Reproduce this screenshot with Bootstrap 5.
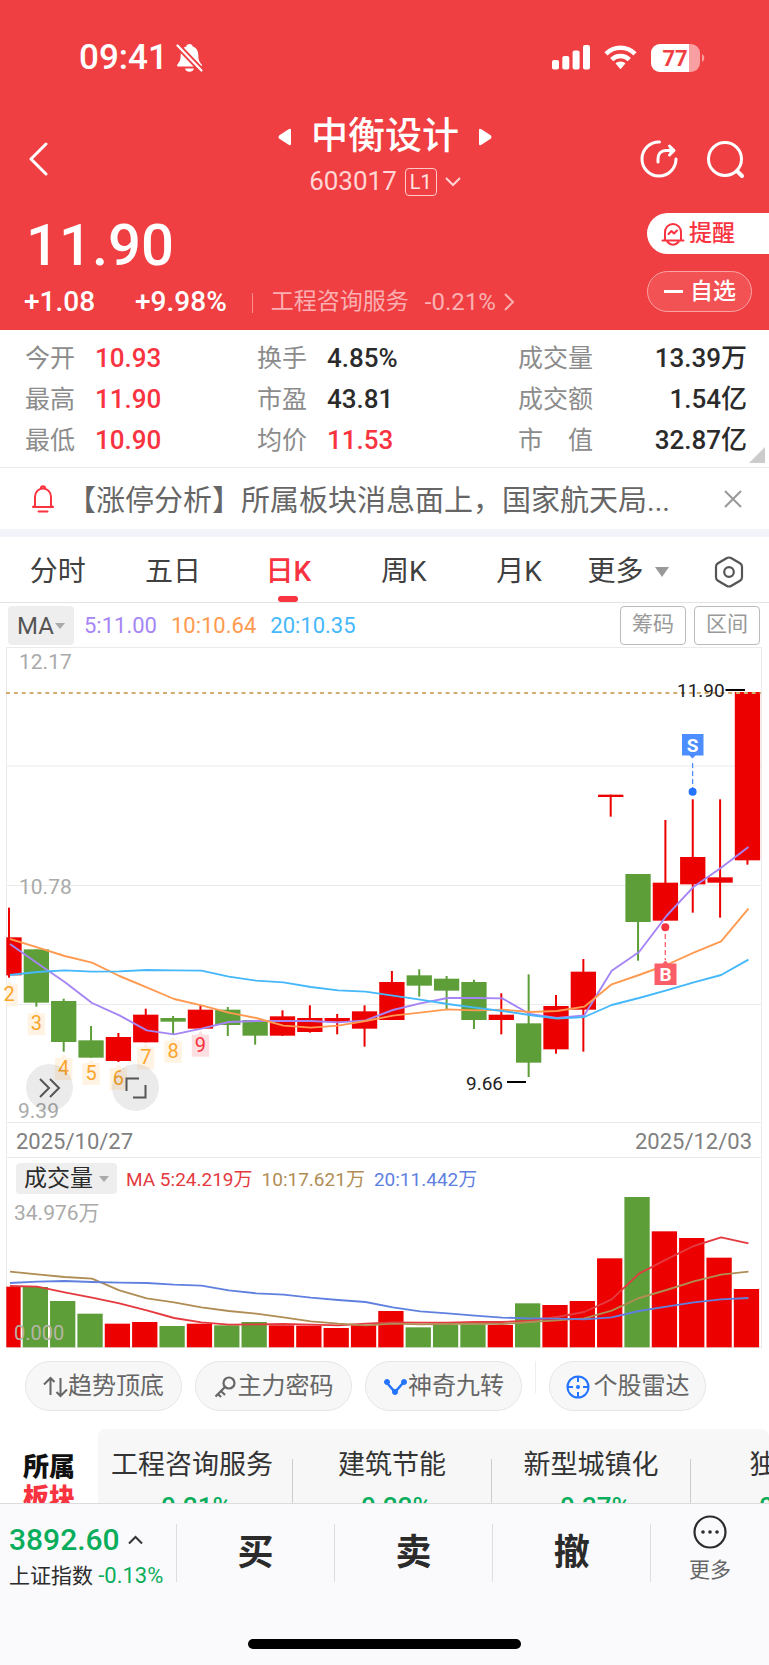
<!DOCTYPE html>
<html lang="zh-CN">
<head>
<meta charset="utf-8">
<meta name="viewport" content="width=device-width, initial-scale=1">
<title>中衡设计 603017</title>
<link href="https://cdn.jsdelivr.net/npm/bootstrap@5.3.0/dist/css/bootstrap.min.css" rel="stylesheet">
<style>
:root{--up:#f9333f;--brand:#f03f42;--down:#0aad5c;--ink:#2b2b2b;--muted:#8c8c8c;--line:#ebebeb}
body{font-family:Roboto,"Noto Sans CJK SC",sans-serif;color:var(--ink);background:#fff;line-height:1.2}
a{color:inherit;text-decoration:none}
button{border:0;background:none;padding:0;color:inherit;white-space:nowrap}
svg{display:block;flex-shrink:0}
.nowrap{white-space:nowrap}
.up{color:var(--up)}
.down{color:var(--down)}
.scroller{overflow:hidden;min-height:0}
/* header */
.hero{background:var(--brand);color:#fff}
.status{height:112px;padding:3px 64px 0 79px}
.clock{font-size:35px;font-weight:500}
.navrow{height:94px;display:grid;grid-template-columns:1fr auto 1fr;align-items:center;padding:0 23px 0 24px}
.title{font-size:37px;line-height:50px;font-weight:500;margin:0}
.codeline{height:40px;font-size:26px;color:#ffd5d6;margin-bottom:4px}
.lvl{border:1px solid #ffc9ca;border-radius:4px;font-size:20px;line-height:26px;padding:0 4px;color:#ffe4e4}
.price{font-size:58px;line-height:78px;font-weight:500;padding-left:26px}
.change{height:36px;font-size:28px;font-weight:500;padding-left:24px}
.sector{font-size:23px;font-weight:400;color:#fab0b2;position:relative;line-height:28px;padding-left:19px;margin-left:25px}
.sector::before{content:"";position:absolute;left:0;top:5px;bottom:3px;width:1px;background:#f78f91}
.quote{height:124px}
.acts{width:122px;padding-top:7px;gap:17px}
.act{height:41px;font-size:23px;font-weight:500;border-radius:21px;width:105px;gap:4px}
.act.alarm{background:#fff;color:var(--up);border-radius:21px 0 0 21px;width:100%;padding-left:14px}
.act.pick{background:#f25254;border:1px solid #f9a3a5;padding-left:16px;gap:7px}
/* stats */
.stats{padding:8px 22px 6px 25px;border-bottom:1px solid var(--line);display:grid;grid-template-columns:232px 261px 1fr;line-height:41px;font-size:25px;position:relative}
.stats dt{font-weight:400;color:var(--muted);font-size:25px;width:50px;white-space:nowrap}
.stats dd{margin:0 0 0 20px;font-size:26px;font-weight:500}
.stats .g3 dt{width:75px}
.fold{position:absolute;right:4px;bottom:4px;width:0;height:0;border-left:16px solid transparent;border-bottom:16px solid #ccc}
.news{height:61px;padding:0 27px 0 31px;color:#666;font-size:29px}
.news a{margin-left:12px;padding-top:5px}
.band{height:8px;background:#f3f4f9}
.tabs{height:66px;border-bottom:1px solid #e3e3e3;font-size:28px;color:#404040}
.tabs button{flex:3 1 0;position:relative;height:65px;padding-top:4px}
.tabs .extra{gap:12px}
.tabs .extra .tri{margin-right:12px}
.tabs .gear{flex:2 1 0}
.tabs .gear svg{margin-right:3px}
.tabs .on{color:var(--up);font-weight:500}
.tabs .on::after{content:"";position:absolute;left:50%;bottom:0;width:20px;height:6px;margin-left:-10px;border-radius:3px;background:var(--up)}
.tri{display:inline-block;border:7px solid transparent;border-top:10px solid #999;border-bottom:0}
.tri.sm{border-width:6px 5px 0;border-top-color:#aaa}
.mas{height:44px;padding:0 9px 0 8px;font-size:22px;gap:14px}
.mas span{padding-top:3px}
.chip{background:#eee;border-radius:4px;color:#555}
.chip.ma{height:39px;width:66px;font-size:24px;gap:1px;padding-top:2px}
.chip.vol{height:31px;width:101px;font-size:23px;color:var(--ink);gap:6px}
.box{height:39px;width:66px;font-size:21px;color:#999;border:1px solid #bbb;border-radius:4px}
.frame{margin:0 7px 0 6px;border:1px solid var(--line);border-top:0;border-bottom:0}
.dates{height:35px;border-bottom:1px solid var(--line);padding:4px 9px 0 9px;font-size:22px;color:#808080}
.vols{height:39px;padding:2px 9px 0;font-size:19px;gap:9px}
.vols span{padding-top:3px}
.chart{position:relative}
.chart svg.plot{width:100%;height:auto}
.orb{position:absolute;bottom:12px;width:47px;height:47px;border-radius:50%;background:rgba(0,0,0,.08)}
.orb.a{left:26px}.orb.b{left:112px}
.pills{padding:13px 25px 18px;gap:13px}
.pill{height:50px;width:157px;border-radius:25px;border:1px solid #e6e6e6;background:#f7f7f7;color:#666;font-size:24px;padding-top:1px}
.pills .vr{height:32px;color:#bbb}
.belong{width:98px;padding-top:23px;padding-left:23px;font-size:26px;line-height:31px;font-weight:900;color:#111}
.plates{background:#f7f7f7;border-radius:8px 8px 0 0;height:120px;overflow:hidden;flex:1 1 0;min-width:0;padding-top:16px}
.plate{flex:0 0 198px;font-size:27px;line-height:40px;text-align:center;color:#333}
.plate.first{flex-basis:194px;padding-right:6px}
.plate b{display:block;font-size:26px;line-height:44px;font-weight:500;color:var(--down)}
.plates .cut{flex:0 0 1px;background:#ccc;height:90px;margin-top:14px}
/* bottom bar */
.dock{background:#fafafd;border-top:1px solid #dcdce0;height:162px}
.dockrow{height:98px}
.index{flex:0 0 176px;padding:16px 0 0 9px}
.index .v{font-size:30px;font-weight:500;line-height:40px}
.index .n{font-size:21px;line-height:32px}
.index .n span{font-size:22px}
.trade{flex:4 1 0;font-size:36px;font-weight:600;border-left:1px solid #dedee2;height:58px;padding-top:2px}
.moreact{flex:3 1 0;border-left:1px solid #dedee2;height:58px;font-size:21px;color:#666;line-height:32px;gap:5px;padding-bottom:5px}
.homebar{width:273px;height:10px;border-radius:5px;background:#000;margin-top:37px}
</style>
</head>
<body class="vh-100 d-flex flex-column overflow-hidden">
<main class="scroller flex-grow-1">
<header class="hero">
  <div class="status d-flex align-items-center justify-content-between">
    <div class="d-flex align-items-center gap-2">
      <span class="clock">09:41</span>
      <svg width="27" height="28" viewBox="0 0 27 28" fill="#fff"><path d="M13.500 0c2 0 3 1 3.200 2.400 4 1.200 5.600 4.600 5.600 8.600 0 5 1.200 7 3.200 9.200.8 1 .5 2.300-.8 2.300H2.300c-1.300 0-1.600-1.300-.8-2.300C3.500 18 4.700 16 4.700 11c0-4 1.600-7.400 5.600-8.600C10.500 1 11.500 0 13.500 0zM9 24.500h9c-.4 2-2.200 3.300-4.500 3.300S9.400 26.500 9 24.500z"/><path d="M1 1l25 26" stroke="#f03f42" stroke-width="6"/><path d="M1.500 1.500l24 25" stroke="#fff" stroke-width="2.200" stroke-linecap="round"/></svg>
    </div>
    <div class="d-flex align-items-center">
      <svg width="38" height="25" viewBox="0 0 38 25" fill="#fff"><rect y="15" width="7" height="9.500" rx="2"/><rect x="10.300" y="11" width="7" height="13.500" rx="2"/><rect x="20.600" y="5.500" width="7" height="19" rx="2"/><rect x="31" width="7" height="24.500" rx="2"/></svg>
      <svg style="margin:0 14px" width="33" height="25" viewBox="0 0 33 25" fill="none" stroke="#fff" stroke-width="4.500"><path d="M2 8.800a20.500 20.500 0 0 1 29 0"/><path d="M7.700 14.700a12.400 12.400 0 0 1 17.600 0"/><path d="M16.500 16.500c2 0 3.700.7 4.900 1.900l-4.900 5.900-4.900-5.900c1.200-1.200 2.900-1.900 4.900-1.900z" fill="#fff" stroke="none"/></svg>
      <svg width="54" height="28" viewBox="0 0 54 28"><rect width="49" height="28" rx="9" fill="#f89fa1"/><path d="M9 0h29v28H9a9 9 0 0 1-9-9V9a9 9 0 0 1 9-9z" fill="#fff"/><path d="M51 10c3 1.500 3 6.500 0 8z" fill="#f89fa1"/><text x="24" y="21.500" font-family="Roboto" font-size="22" font-weight="700" fill="#f03f42" text-anchor="middle">77</text></svg>
    </div>
  </div>
  <div class="navrow">
    <button class="text-start ps-1" aria-label="返回"><svg width="20" height="34" viewBox="0 0 20 34" fill="none" stroke="#fff" stroke-width="3" stroke-linecap="round" stroke-linejoin="round"><path d="M18 2L3 17l15 15"/></svg></button>
    <div>
      <div class="d-flex align-items-center justify-content-center" style="gap:20px">
        <button aria-label="上一只"><svg width="13" height="18" viewBox="0 0 13 18"><path d="M13 2v14q0 2-2 1L1 10.500q-1-1.500 0-3L11 1q2-1 2 1z" fill="#fff"/></svg></button>
        <h1 class="title nowrap">中衡设计</h1>
        <button aria-label="下一只"><svg width="13" height="18" viewBox="0 0 13 18"><path d="M0 2v14q0 2 2 1l10-6.500q1-1.500 0-3L2 1Q0 0 0 2z" fill="#fff"/></svg></button>
      </div>
      <div class="codeline d-flex align-items-center justify-content-center gap-2"><span>603017</span><span class="lvl">L1</span><svg width="16" height="10" viewBox="0 0 16 10" fill="none" stroke="#ffd5d6" stroke-width="2"><path d="M1 1l7 7 7-7"/></svg></div>
    </div>
    <div class="d-flex justify-content-end" style="gap:28px">
      <button aria-label="分享"><svg width="40" height="40" viewBox="0 0 40 40" fill="none" stroke="#fff" stroke-width="3" stroke-linecap="round" stroke-linejoin="round"><path d="M21.500 3A17 17 0 1 0 38 20"/><path d="M20 23v-3c0-5 3-8.500 8-8.500h6"/><path d="M31.500 7l4.500 4.500-4.500 4.500" fill="#fff"/></svg></button>
      <button aria-label="搜索"><svg width="40" height="40" viewBox="0 0 40 40" fill="none" stroke="#fff" stroke-width="3" stroke-linecap="round"><circle cx="19" cy="20" r="16.500"/><path d="M31 32l5 5" stroke-width="4"/></svg></button>
    </div>
  </div>
  <div class="quote d-flex justify-content-between">
    <div>
      <div class="price">11.90</div>
      <div class="change d-flex align-items-center nowrap"><span>+1.08</span><span style="margin-left:40px">+9.98%</span><a href="#" class="sector d-flex align-items-center"><span>工程咨询服务</span><span class="ms-3" style="font-size:24px">-0.21%</span><svg class="ms-2" width="11" height="18" viewBox="0 0 11 18" fill="none" stroke="#fab0b2" stroke-width="2"><path d="M1 1l8 8-8 8"/></svg></a></div>
    </div>
    <div class="acts d-flex flex-column">
      <button class="act alarm d-flex align-items-center"><svg width="24" height="25" viewBox="0 0 24 25" fill="none" stroke="#f9333f" stroke-width="2" stroke-linecap="round" stroke-linejoin="round"><path d="M4 19V11a8 8 0 0 1 16 0v8M1.500 19.500h21M6.500 21c3 3.500 8 3.500 11 0M7.500 13l3-3 2.500 2.500 3-3"/></svg>提醒</button>
      <button class="act pick d-flex align-items-center"><svg width="19" height="3" viewBox="0 0 19 3"><rect width="19" height="3" fill="#fff"/></svg>自选</button>
    </div>
  </div>
</header>

<section class="stats">
  <div>
    <dl class="d-flex m-0"><dt>今开</dt><dd class="up">10.93</dd></dl>
    <dl class="d-flex m-0"><dt>最高</dt><dd class="up">11.90</dd></dl>
    <dl class="d-flex m-0"><dt>最低</dt><dd class="up">10.90</dd></dl>
  </div>
  <div>
    <dl class="d-flex m-0"><dt>换手</dt><dd>4.85%</dd></dl>
    <dl class="d-flex m-0"><dt>市盈</dt><dd>43.81</dd></dl>
    <dl class="d-flex m-0"><dt>均价</dt><dd class="up">11.53</dd></dl>
  </div>
  <div class="g3">
    <dl class="d-flex m-0 justify-content-between"><dt>成交量</dt><dd>13.39万</dd></dl>
    <dl class="d-flex m-0 justify-content-between"><dt>成交额</dt><dd>1.54亿</dd></dl>
    <dl class="d-flex m-0 justify-content-between"><dt>市　值</dt><dd>32.87亿</dd></dl>
  </div>
  <i class="fold"></i>
</section>

<div class="news d-flex align-items-center">
  <svg width="24" height="28" viewBox="0 0 24 28" fill="none" stroke="#f9333f" stroke-width="2" stroke-linecap="round" stroke-linejoin="round"><path d="M4 21V12c0-5 3.500-8.500 8-8.500s8 3.500 8 8.500v9l2 1H2zM10 3c0-2.500 4-2.500 4 0M7.500 26.500h9"/></svg>
  <a href="#" class="nowrap flex-grow-1">【涨停分析】所属板块消息面上，国家航天局...</a>
  <button aria-label="关闭"><svg width="18" height="18" viewBox="0 0 18 18" stroke="#999" stroke-width="2"><path d="M1 1l16 16M17 1L1 17"/></svg></button>
</div>
<div class="band"></div>

<nav class="tabs d-flex">
  <button>分时</button><button>五日</button><button class="on">日K</button><button>周K</button><button>月K</button>
  <button class="extra d-flex align-items-center justify-content-center">更多<i class="tri"></i></button>
  <button class="gear d-flex align-items-center justify-content-center" aria-label="设置"><svg width="30" height="32" viewBox="0 0 30 32" fill="none" stroke="#555" stroke-width="2.200" stroke-linejoin="round"><path d="M12.500 2.200q2.500-1.400 5 0l8.500 5q2 1.200 2 3.500v10.600q0 2.300-2 3.500l-8.500 5q-2.500 1.400-5 0l-8.500-5q-2-1.200-2-3.500V10.700q0-2.300 2-3.500z"/><circle cx="15" cy="16" r="4.800"/></svg></button>
</nav>

<div class="mas d-flex align-items-center nowrap">
  <button class="chip ma d-flex align-items-center justify-content-center">MA<i class="tri sm"></i></button>
  <span style="color:#a585f5;margin-left:-4px">5:11.00</span>
  <span style="color:#ff9a50">10:10.64</span>
  <span style="color:#45b8fb">20:10.35</span>
  <div class="ms-auto d-flex gap-2"><button class="box">筹码</button><button class="box">区间</button></div>
</div>

<div class="chart">
  <svg class="plot" id="kline" viewBox="0 647 769 476" font-family="Roboto" role="img" aria-label="日K线"></svg>
  <button class="orb a d-flex align-items-center justify-content-center" aria-label="展开"><svg width="22" height="20" viewBox="0 0 22 20" fill="none" stroke="#555" stroke-width="2"><path d="M1 1l9 9-9 9M11 1l9 9-9 9"/></svg></button>
  <button class="orb b d-flex align-items-center justify-content-center" aria-label="全屏"><svg width="22" height="22" viewBox="0 0 22 22" fill="none" stroke="#555" stroke-width="2"><path d="M1.500 14V1.500H14M20.500 8v12.500H8"/></svg></button>
</div>
<div class="frame">
  <div class="dates d-flex align-items-center justify-content-between"><span>2025/10/27</span><span>2025/12/03</span></div>
  <div class="vols d-flex align-items-center nowrap">
    <button class="chip vol d-flex align-items-center justify-content-center">成交量<i class="tri sm"></i></button>
    <span style="color:#e43a3f">MA 5:24.219万</span>
    <span style="color:#b08d55">10:17.621万</span>
    <span style="color:#6080e0">20:11.442万</span>
  </div>
</div>
<div class="chart"><svg class="plot" id="volume" viewBox="0 1197 769 151" font-family="Roboto,'Noto Sans CJK SC',sans-serif" role="img" aria-label="成交量"></svg></div>

<div class="pills d-flex align-items-center">
  <button class="pill d-flex align-items-center justify-content-center"><svg width="25" height="22" viewBox="0 0 25 22" fill="none" stroke="#666" stroke-width="2"><path d="M7.500 19V2M1 8.500L7.500 2l4 4M17.500 2v18M24 13.500L17.500 20l-4-4"/></svg>趋势顶底</button>
  <button class="pill d-flex align-items-center justify-content-center"><svg width="24" height="22" viewBox="0 0 24 22" fill="none" stroke="#666" stroke-width="2.200"><circle cx="15" cy="7" r="5.500"/><path d="M11 11L1.500 20.500M7 15l4 4M4 18l3 3"/></svg>主力密码</button>
  <button class="pill d-flex align-items-center justify-content-center"><svg width="25" height="22" viewBox="0 0 25 22" fill="#2474ff" stroke="#2474ff"><path d="M4 7l8 9 8-9" fill="none" stroke-width="2.500"/><circle cx="4" cy="6" r="2.500"/><circle cx="12" cy="16" r="2.500"/><circle cx="21" cy="6" r="2.500"/></svg>神奇九转</button>
  <span class="vr"></span>
  <button class="pill d-flex align-items-center justify-content-center"><svg class="me-1" width="24" height="24" viewBox="0 0 24 24" fill="none" stroke="#2474ff" stroke-width="2"><circle cx="12" cy="12" r="10.500"/><path d="M12 1v6M12 17v6M1 12h6M17 12h6"/><circle cx="12" cy="12" r="2" fill="#2474ff" stroke="none"/></svg>个股雷达</button>
</div>

<section class="d-flex">
  <div class="belong">所属<br><span class="up">板块</span></div>
  <div class="plates d-flex nowrap">
    <a href="#" class="plate first">工程咨询服务<b>-0.21%</b></a><i class="cut"></i>
    <a href="#" class="plate">建筑节能<b>-0.22%</b></a><i class="cut"></i>
    <a href="#" class="plate">新型城镇化<b>-0.37%</b></a><i class="cut"></i>
    <a href="#" class="plate">独角兽<b>-0.45%</b></a>
  </div>
</section>
</main>

<footer class="dock flex-shrink-0">
  <div class="dockrow d-flex align-items-center nowrap">
    <a href="#" class="index align-self-start">
      <div class="v down d-flex align-items-center gap-2">3892.60<svg width="15" height="10" viewBox="0 0 15 10" fill="none" stroke="#333" stroke-width="2"><path d="M1 8.500L7.500 2 14 8.500"/></svg></div>
      <div class="n">上证指数 <span class="down">-0.13%</span></div>
    </a>
    <button class="trade">买</button><button class="trade">卖</button><button class="trade">撤</button>
    <button class="moreact d-flex flex-column align-items-center justify-content-center"><svg width="34" height="34" viewBox="0 0 34 34" fill="none" stroke="#2b2b2b" stroke-width="2.200"><circle cx="17" cy="17" r="15.500"/><g fill="#2b2b2b" stroke="none"><circle cx="10" cy="17" r="1.800"/><circle cx="17" cy="17" r="1.800"/><circle cx="24" cy="17" r="1.800"/></g></svg><span>更多</span></button>
  </div>
  <div class="homebar mx-auto"></div>
</footer>

<script src="https://cdn.jsdelivr.net/npm/bootstrap@5.3.0/dist/js/bootstrap.bundle.min.js"></script>
<script>
const RED='#ec0000', GREEN='#5d9e39', STEP=27.35;
const cx=i=>9+STEP*i;
const rect=(x,y,w,h,f)=>`<rect x="${x}" y="${y}" width="${w}" height="${h}" fill="${f}"/>`;
const rule=(x1,y1,x2,y2,c,w=1,d='')=>`<path d="M${x1} ${y1}L${x2} ${y2}" stroke="${c}" stroke-width="${w}" stroke-dasharray="${d}"/>`;
const label=(x,y,s,t,c,a='start',w=400)=>`<text x="${x}" y="${y}" font-size="${s}" fill="${c}" text-anchor="${a}" font-weight="${w}">${t}</text>`;
// values are in thirds of a unit below the base line of each plot
const series=(v,base,c)=>`<polyline fill="none" stroke="${c}" stroke-width="1.9" stroke-linejoin="round" points="${v.map((y,i)=>(cx(i)+1)+','+(base+y/3)).join(' ')}"/>`;

// colour, high, low, body top, body bottom
const candles=[['r',803,1013,892,1006],['g',928,1100,928,1088],['g',1076,1235,1083,1206],['g',1158,1253,1201,1253],['r',1179,1266,1191,1263],['r',1106,1207,1124,1207],['g',1128,1182,1134,1145],['r',1098,1167,1109,1166],['g',1101,1188,1109,1155],['g',1140,1214,1140,1187],['r',1111,1188,1129,1187],['r',1096,1178,1134,1176],['r',1122,1183,1134,1145],['r',1096,1220,1114,1166],['r',993,1140,1026,1140],['g',988,1070,1006,1037],['g',1008,1108,1016,1052],['g',1019,1167,1026,1140],['r',1060,1183,1124,1140],['g',1003,1311,1150,1268],['r',1065,1241,1098,1228],['r',957,1235,995,1109],['r',464,530,464,471],['g',702,962,702,846],['r',540,842,728,842],['r',478,818,651,733],['r',478,833,712,728],['r',156,674,156,661]];
let k='';
[647.5,766,885.5,1004.5].forEach(y=>k+=rule(6,y,762,y,'#ebebeb'));
k+=rule(6.5,647,6.5,1123,'#ebebeb')+rule(761.5,647,761.5,1123,'#ebebeb')+rule(6,1122.5,762,1122.5,'#ebebeb');
k+=label(19,669,21,'12.17','#aaa')+label(19,893.5,21,'10.78','#aaa')+label(18,1118,21,'9.39','#aaa');
candles.forEach(([c,h,l,t,b],i)=>{const f=c==='r'?RED:GREEN,x=cx(i);
  const left=Math.max(6.3,x-12.65);
  k+=rect(left,640+t/3,x+12.65-left,(b-t)/3,f)+rect(x-1,640+h/3,2,(l-h)/3,f);});
k+=rule(6,693,761,693,'#d5ab72',1.9,'4 3.85');
k+=series([912,970,1026,1089,1126,1171,1183,1166,1146,1143,1143,1143,1147,1141,1110,1090,1074,1074,1075,1122,1134,1126,992,936,828,740,683,621],640,'#a585f5');
k+=series([897,922,948,968,1008,1042,1077,1096,1118,1134,1157,1163,1157,1143,1127,1118,1108,1111,1109,1116,1113,1100,1033,1005,975,938,904,806],640,'#ff9a50');
k+=series([1005,996,991,995,994,990,991,992,1010,1022,1027,1041,1051,1055,1067,1079,1092,1103,1113,1125,1136,1131,1095,1074,1051,1027,1005,959],640,'#45b8fb');
// nine-turn counters
[1033,1120,1254,1269,1284,1222,1202,1184].forEach((t,i)=>{const x=cx(i),y=640+t/3,nine=i===7,l=Math.max(6.3,x-8.7);
  k+=`<path d="M${l} ${y}H${x-3}L${x} ${y-4}L${x+3} ${y}H${x+8.7}V${y+22}H${l}z" fill="${nine?'#fddfe1':'#fff3e3'}"/>`+label(x,y+17,20,i+2,nine?'#f9333f':'#faa62c','middle');});
k+=label(677,697,19,'11.90','#222')+rule(725.5,690,745,690,'#000',2)+label(466,1089.500,19,'9.66','#222')+rule(507,1082,526,1082,'#000',2);
k+=`<path d="M682 734h21.500v21.500h-8l-3 3-3-3H682z" fill="#4c8dff"/>`+label(692.7,752,19,'S','#fff','middle',700)+rule(692.6,763,692.6,788,'#4c8dff',1.3,'5 3')+`<circle cx="692.6" cy="791.700" r="4" fill="#2474ff"/>`;
k+=`<circle cx="665.300" cy="927.300" r="4" fill="#f9333f"/>`+rule(665.3,934,665.3,960,'#f9606a',1.3,'5 3')+`<path d="M654.500 963.500h8l3-3 3 3h8V985h-22z" fill="#fa5f69"/>`+label(665.5,981,19,'B','#fff','middle',700);
document.getElementById('kline').innerHTML=k;

const bars=[['r',530],['g',531],['g',573],['g',611],['r',641],['r',636],['g',648],['r',641],['g',646],['g',636],['r',646],['r',647],['r',654],['r',646],['r',603],['g',652],['g',645],['g',643],['r',645],['g',580],['r',585],['r',573],['r',445],['g',261],['r',364],['r',384],['r',443],['r',537]];
let v=rule(6.5,1197,6.5,1347,'#ebebeb')+rule(761.5,1197,761.5,1348,'#ebebeb')+rule(6,1347.5,762,1347.5,'#ebebeb');
bars.forEach(([c,t],i)=>{const l=Math.max(6.3,cx(i)-13.65),y=1110+t/3;v+=rect(l,y,cx(i)+11.65-l,1347.3-y,c==='r'?RED:GREEN);});
v+=series([528,530,547,563,580,601,624,637,644,643,642,644,646,641,637,638,638,636,636,632,621,606,568,491,448,408,382,400],1110,'#e43a3f');
v+=series([485,493,501,506,541,565,577,592,603,611,622,634,641,646,641,643,642,641,642,636,631,625,602,564,540,514,494,485],1110,'#b08d55');
v+=series([519,515,513,516,518,519,524,527,541,550,554,563,570,576,592,604,610,617,623,625,626,628,622,603,590,577,568,564],1110,'#6080e0');
v+=label(14,1220,21,'34.976万','#aaa')+label(14,1340,20,'0.000','#b5b5a5');
document.getElementById('volume').innerHTML=v;
</script>
</body>
</html>
